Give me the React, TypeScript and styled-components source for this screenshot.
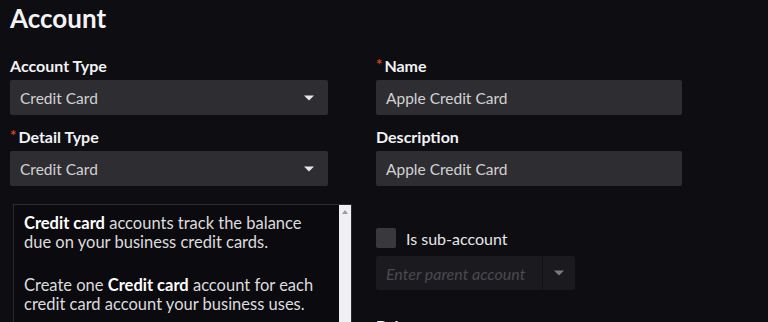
import React from 'react';
import styled, { createGlobalStyle } from 'styled-components';

const GlobalStyle = createGlobalStyle`
    html, body {
        margin: 0;
        padding: 0;
        background: #0e0d12;
        overflow: hidden;
    }
    * {
        box-sizing: border-box;
    }
`;

const Page = styled.div`
    width: 768px;
    height: 322px;
    padding: 0 10px;
    background: #0e0d12;
    color: #ffffff;
    font-family: 'Lato', 'Open Sans', sans-serif;
    overflow: hidden;
`;

const Title = styled.h1`
    margin: 0;
    font-size: 26px;
    line-height: 36px;
    font-weight: 700;
    color: #f4f4f6;
`;

const Columns = styled.div`
    display: grid;
    grid-template-columns: 318px 306px;
    column-gap: 48px;
    margin-top: 20px;
`;

const Column = styled.div`
    display: flex;
    flex-direction: column;
`;

const Field = styled.div<{ $mt?: number }>`
    display: flex;
    flex-direction: column;
    gap: 4px;
    margin-top: ${p => p.$mt ?? 0}px;
`;

const Label = styled.label`
    display: flex;
    align-items: flex-start;
    font-size: 16px;
    line-height: 20px;
    font-weight: 700;
    color: #f2f2f4;
`;

const Star = styled.span`
    color: #d4441c;
    font-size: 15px;
    line-height: 16px;
    margin-right: 2px;
`;

const Box = styled.div<{ $width?: number; $disabled?: boolean }>`
    display: flex;
    align-items: center;
    height: ${p => (p.$disabled ? 34 : 35)}px;
    width: ${p => (p.$width ? `${p.$width}px` : '100%')};
    background: ${p => (p.$disabled ? '#1b1a1f' : '#2e2e32')};
    border-radius: 2px;
    font-size: 15.5px;
    color: #d2d2d4;
`;

const BoxText = styled.span<{ $placeholder?: boolean }>`
    flex: 1;
    padding-left: 10px;
    font-style: ${p => (p.$placeholder ? 'italic' : 'normal')};
    font-size: ${p => (p.$placeholder ? 16 : 15.5)}px;
    color: ${p => (p.$placeholder ? '#4a4a50' : '#d2d2d4')};
    white-space: nowrap;
`;

const Caret = styled.span<{ $divided?: boolean }>`
    display: flex;
    align-items: center;
    justify-content: center;
    align-self: stretch;
    width: ${p => (p.$divided ? 33 : 38)}px;
    border-left: ${p => (p.$divided ? '1px solid #131217' : 'none')};
`;

const Arrow = ({ color = '#e8e8ea' }: { color?: string }) => (
    <svg width="10" height="6" viewBox="0 0 10 6">
        <path d="M0 0.5 L10 0.5 L5 5.5 Z" fill={color} />
    </svg>
);

const InfoBox = styled.div`
    display: flex;
    margin: 18px 0 0 3px;
    width: 339px;
    height: 140px;
    border: 1px solid #2b2a30;
    background: #0b0a0e;
`;

const InfoText = styled.div`
    flex: 1;
    padding: 9px 20px 9px 10px;
    font-size: 16.5px;
    line-height: 19px;
    color: #dcdcde;

    p {
        margin: 0 0 24px;
    }

    b {
        color: #ffffff;
        font-weight: 700;
    }
`;

const Scrollbar = styled.div`
    width: 12px;
    background: #f0f0f4;
    display: flex;
    justify-content: center;
    padding-top: 5px;
`;

const CheckRow = styled.div`
    display: flex;
    align-items: center;
    gap: 10px;
    margin-top: 42px;
    font-size: 16px;
    color: #e6e6e8;
`;

const CheckBox = styled.span`
    width: 20px;
    height: 20px;
    border-radius: 2px;
    background: #39383d;
`;

export default function App() {
    return (
        <>
            <GlobalStyle />
            <Page>
                <Title>Account</Title>
                <Columns>
                    <Column>
                        <Field>
                            <Label>Account Type</Label>
                            <Box>
                                <BoxText>Credit Card</BoxText>
                                <Caret>
                                    <Arrow />
                                </Caret>
                            </Box>
                        </Field>
                        <Field $mt={12}>
                            <Label>
                                <Star>*</Star>Detail Type
                            </Label>
                            <Box>
                                <BoxText>Credit Card</BoxText>
                                <Caret>
                                    <Arrow />
                                </Caret>
                            </Box>
                        </Field>
                        <InfoBox>
                            <InfoText>
                                <p>
                                    <b>Credit card</b> accounts track the balance due on your
                                    business credit cards.
                                </p>
                                <p>
                                    Create one <b>Credit card</b> account for each credit card
                                    account your business uses.
                                </p>
                            </InfoText>
                            <Scrollbar>
                                <svg width="6" height="4" viewBox="0 0 6 4">
                                    <path d="M0 4 L6 4 L3 0 Z" fill="#9a9aa0" />
                                </svg>
                            </Scrollbar>
                        </InfoBox>
                    </Column>
                    <Column>
                        <Field>
                            <Label>
                                <Star>*</Star>Name
                            </Label>
                            <Box>
                                <BoxText>Apple Credit Card</BoxText>
                            </Box>
                        </Field>
                        <Field $mt={12}>
                            <Label>Description</Label>
                            <Box>
                                <BoxText>Apple Credit Card</BoxText>
                            </Box>
                        </Field>
                        <CheckRow>
                            <CheckBox />
                            Is sub-account
                        </CheckRow>
                        <Field $mt={8}>
                            <Box $width={199} $disabled>
                                <BoxText $placeholder>Enter parent account</BoxText>
                                <Caret $divided>
                                    <Arrow color="#7a7a80" />
                                </Caret>
                            </Box>
                        </Field>
                        <Field $mt={26}>
                            <Label>Balance</Label>
                        </Field>
                    </Column>
                </Columns>
            </Page>
        </>
    );
}
